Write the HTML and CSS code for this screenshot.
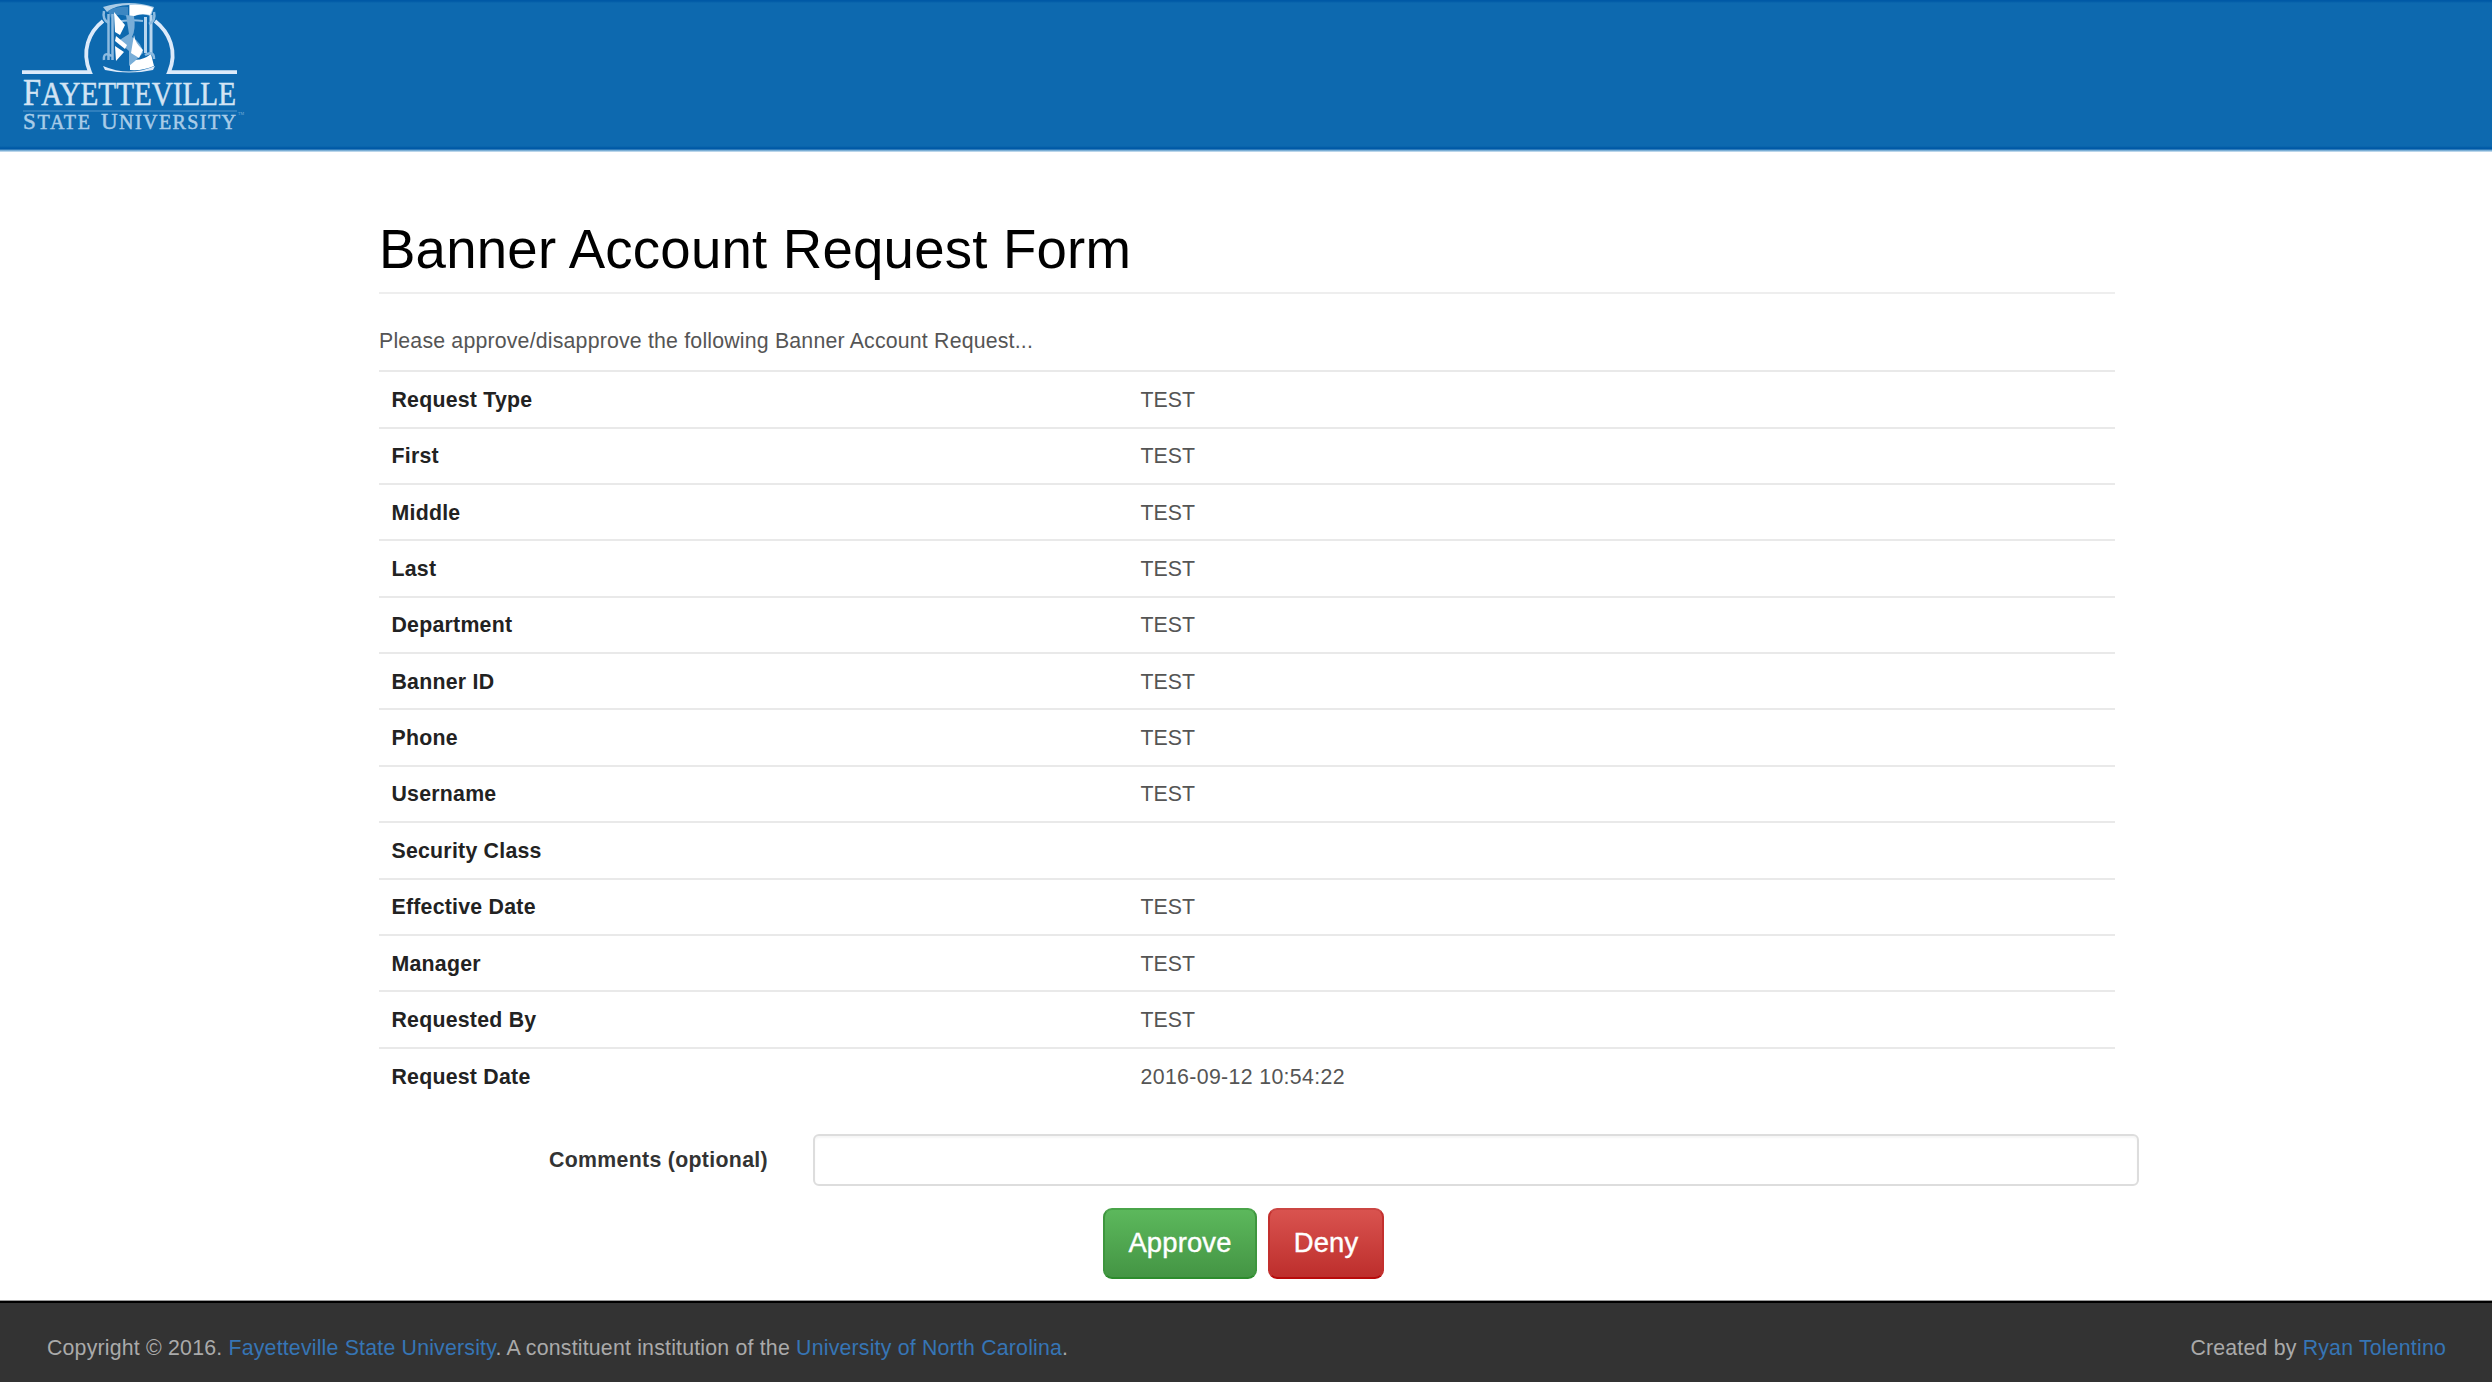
FILE: index.html
```html
<!DOCTYPE html>
<html lang="en">
<head>
<meta charset="utf-8">
<title>Banner Account Request Form</title>
<link rel="stylesheet" href="styles.css">
</head>
<body>
<header class="site-header">
<svg class="logo" viewBox="0 0 260 146" role="img" aria-label="Fayetteville State University">
  <g fill="none" stroke="#dceafa" stroke-width="3.8">
    <path d="M22 72.2H90C81 51 89 32 103 21"/>
    <path d="M237 72.2H169C178 51 169 32 155 21"/>
  </g>
  <path d="M103 7Q129-1 154 7L151 16Q141 12 129 18V5Q116 5 107 12Z" fill="#a9cbe6"/>
  <path d="M108 11Q117 6 128 7V17Q118 12 111 18Z" fill="#3d87c2"/>
  <path d="M130 5Q143 4 153 8L150 15Q140 12 130 18Z" fill="#fff"/>
  <path d="M103 66Q129 77 155 66L153 70Q129 75 105 70Z" fill="#dceafa"/>
  <path d="M130 59Q141 62 151 54L154 66Q143 71 130 70Z" fill="#fff"/>
  <g fill="none" stroke="#8dbbe0" stroke-width="3">
    <path d="M108.500 14V60M112.500 14V60" stroke-width="2.500"/>
    <path d="M145.500 17V53M151 15V54" stroke="#b9d6ee"/>
    <path d="M104 11Q102 20 109 23M154 12Q156 21 149 24M104 60Q103 51 112 56M154 59Q154 50 145 55" stroke-width="2.500"/>
    <path d="M116 22Q130 19 143 21" stroke-width="2"/>
  </g>
  <path d="M126 15L134 16Q136 30 132 37Q142 43 143 53L135 61L129 66V51L118 41L129 34Z" fill="#79aed8"/>
  <path d="M114 12L119 18L125 25L120 35L115 32ZM115 46L124 52L116 61ZM134 35Q135 43 143 50L139 58L131 53ZM116 36L127 45L125 49L115 41Z" fill="#fff"/>
  <g class="logo-type">
    <text x="23" y="105" font-size="38" textLength="213" lengthAdjust="spacingAndGlyphs" fill="#d3e4f4" stroke="#d3e4f4">F<tspan font-size="34">AYETTEVILLE</tspan></text>
    <path d="M23 111H237" stroke="#2f7fbd" stroke-width="2"/>
    <text x="23" y="129" font-size="23" textLength="67" fill="#a9cce8" stroke="#a9cce8">S<tspan font-size="20">TATE</tspan></text>
    <text x="101" y="129" font-size="23" textLength="135" fill="#a9cce8" stroke="#a9cce8">U<tspan font-size="20">NIVERSITY</tspan></text>
    <text x="238" y="115" font-size="4" fill="#79aed8">TM</text>
  </g>
</svg>
</header>
<main class="container">
<h1 class="title">Banner Account Request Form</h1>
<p class="intro">Please approve/disapprove the following Banner Account Request...</p>
<table class="details">
<tr><th>Request Type</th><td>TEST</td></tr>
<tr><th>First</th><td>TEST</td></tr>
<tr><th>Middle</th><td>TEST</td></tr>
<tr><th>Last</th><td>TEST</td></tr>
<tr><th>Department</th><td>TEST</td></tr>
<tr><th>Banner ID</th><td>TEST</td></tr>
<tr><th>Phone</th><td>TEST</td></tr>
<tr><th>Username</th><td>TEST</td></tr>
<tr><th>Security Class</th><td></td></tr>
<tr><th>Effective Date</th><td>TEST</td></tr>
<tr><th>Manager</th><td>TEST</td></tr>
<tr><th>Requested By</th><td>TEST</td></tr>
<tr><th>Request Date</th><td class="timestamp">2016-09-12 10:54:22</td></tr>
</table>
<form class="response">
<div class="comments"><label for="comments">Comments (optional)</label><input id="comments" type="text"></div>
<div class="actions"><button type="button" class="btn approve">Approve</button><button type="button" class="btn deny">Deny</button></div>
</form>
</main>
<footer class="site-footer">
<div>Copyright © 2016. <a href="#">Fayetteville State University</a>. A constituent institution of the <a href="#">University of North Carolina</a>.</div>
<div>Created by <a href="#">Ryan Tolentino</a></div>
</footer>
</body>
</html>
```
FILE: styles.css
```css
* { box-sizing: border-box; }
body { margin: 0; height: 1382px; display: flex; flex-direction: column; background: #fff; color: #555; font: 21.3px/30.4px "Liberation Sans", Arial, sans-serif; }
.site-header { height: 152px; flex: none; background: linear-gradient(#0059a6 0 1px, #0d69af 3px 146px, #0059a6 148px 149px, #5c9bcb 150px, #d8e8f4 152px); }
.logo { display: block; width: 260px; height: 146px; }
.logo-type { font-family: "Liberation Serif", "Times New Roman", serif; stroke-width: 0.5px; }
.container { width: 1736px; margin-left: 379px; flex: 1; }
.title { margin: 68px 0 0; height: 74px; border-bottom: 2px solid #eee; color: #000; font-size: 54.6px; font-weight: 400; line-height: 60px; letter-spacing: 0.21px; white-space: nowrap; }
.intro { margin: 32px 0 14px; letter-spacing: 0.19px; white-space: nowrap; }
.details { width: 100%; border-collapse: collapse; table-layout: fixed; }
.details tr { height: 56.35px; }
.details th, .details td { padding: 1px 12.5px 0; border-top: 2px solid #e9e9e9; text-align: left; line-height: 30px; white-space: nowrap; }
.details th { width: 749px; color: #222; font-weight: 700; letter-spacing: 0.24px; }
.details .timestamp { letter-spacing: 0.35px; }
.comments { display: flex; height: 52px; margin: 30px -25px 0 0; align-items: center; }
.comments label { width: 389px; text-align: right; font-weight: 700; letter-spacing: 0.32px; color: #333; }
.comments input { width: 1326px; height: 52px; margin: 0 0 0 45px; border: 2px solid #ddd; border-radius: 6px; box-shadow: inset 0 2px 2px #f6f6f6; }
.actions { display: flex; gap: 11px; margin: 22px 0 0 724px; }
.btn { height: 71px; padding: 0; border: 2px solid; border-radius: 9px; color: #fff; font: 27.4px "Liberation Sans", Arial, sans-serif; letter-spacing: 0.15px; -webkit-text-stroke: 0.4px #fff; }
.approve { width: 154px; background: linear-gradient(#5cb85c, #449544); border-color: #4aa44a #3e963e #2c8c2c; }
.deny { width: 116px; background: linear-gradient(#d9534f, #bd2e2c); border-color: #cb4643 #c3302e #b80a0a; }
.site-footer { height: 82px; flex: none; padding: 32px 46px 0 47px; display: flex; justify-content: space-between; border-top: 1px solid #999; background: linear-gradient(#000 2px, #333 2px); color: #aaa; letter-spacing: 0.2px; white-space: nowrap; }
.site-footer a { color: #3675b5; text-decoration: none; }
```
